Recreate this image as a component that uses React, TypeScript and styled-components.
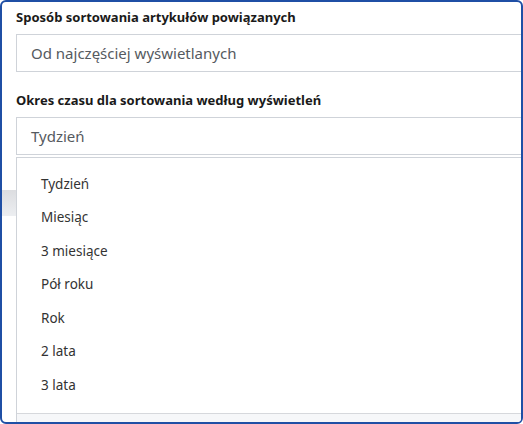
import React from 'react';
import styled, { createGlobalStyle } from 'styled-components';

const GlobalStyle = createGlobalStyle`
  html, body {
    margin: 0;
    padding: 0;
    background: #fff;
  }
  body {
    font-family: "Noto Sans", "Open Sans", sans-serif;
  }
`;

const Frame = styled.div`
  box-sizing: border-box;
  width: 523px;
  height: 424px;
  border: 2px solid #1f4fa5;
  border-radius: 6px;
  overflow: hidden;
  position: relative;
  background: #fff;
`;

const Content = styled.div`
  width: 560px;
  padding: 6px 0 0 14px;
  position: relative;
`;

const Label = styled.div`
  font-size: 13px;
  font-weight: 700;
  color: #1a1a1a;
  line-height: 18px;
  margin-bottom: 8px;
`;

const Field = styled.div<{ $gap?: number }>`
  position: relative;
  margin-bottom: ${(p) => p.$gap ?? 0}px;
`;

const SelectBox = styled.div`
  box-sizing: border-box;
  height: 38px;
  border: 1px solid #cfd3d9;
  display: flex;
  align-items: center;
  padding-left: 14px;
  font-size: 15px;
  color: #555a60;
  background: #fff;
`;

const Behind = styled.div`
  margin-left: -14px;
  height: 400px;
`;

const GreyBand = styled.div`
  margin-top: 35px;
  height: 26px;
  background: linear-gradient(#dcdde0, #eceef1);
`;

const Menu = styled.ul`
  position: absolute;
  top: 40px;
  left: 0;
  right: 0;
  margin: 0;
  padding: 9px 0 0;
  list-style: none;
  border: 1px solid #cfd3d9;
  border-bottom: none;
  background: #fff;
  z-index: 2;
`;

const Item = styled.li`
  height: 33.5px;
  display: flex;
  align-items: center;
  padding-left: 24px;
  font-size: 13.5px;
  color: #333;
`;

const MenuFooter = styled.div`
  margin-top: 11px;
  height: 20px;
  border-top: 1px solid #d6d8dc;
  background: #f6f7f9;
`;

const options = ['Tydzień', 'Miesiąc', '3 miesiące', 'Pół roku', 'Rok', '2 lata', '3 lata'];

export default function App() {
  return (
    <>
      <GlobalStyle />
      <Frame>
        <Content>
          <Label>Sposób sortowania artykułów powiązanych</Label>
          <Field $gap={19}>
            <SelectBox>Od najczęściej wyświetlanych</SelectBox>
          </Field>
          <Label>Okres czasu dla sortowania według wyświetleń</Label>
          <Field>
            <SelectBox>Tydzień</SelectBox>
            <Menu>
              {options.map((o) => (
                <Item key={o}>{o}</Item>
              ))}
              <MenuFooter />
            </Menu>
          </Field>
          <Behind>
            <GreyBand />
          </Behind>
        </Content>
      </Frame>
    </>
  );
}
